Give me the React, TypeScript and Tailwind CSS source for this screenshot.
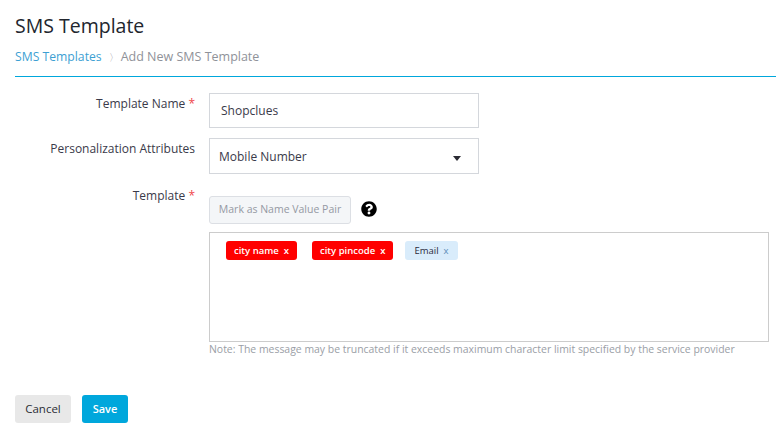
import { FaQuestionCircle } from "react-icons/fa";

const Tag = ({ label, light }: { label: string; light?: boolean }) => (
    <span
        className={`flex h-[19px] items-center rounded-[3px] pt-[1px] text-[9.5px] ${
            light ? "bg-[#d9ecfb] px-[9px] font-normal text-[#2b2b3b]" : "bg-[#ff0000] px-[8px] font-semibold text-white"
        }`}
    >
        {label}
        <span className={`ml-[5px] ${light ? "text-[#5b8db8]" : ""}`}>x</span>
    </span>
);

export default function App() {
    return (
        <div className="h-[429px] w-[776px] overflow-hidden bg-white font-['Open_Sans',sans-serif] text-[#3a3a4a]">
            <div className="pl-[15px]">
                <h1 className="pt-[12px] text-[19.5px] leading-[28px] text-[#22262e]">SMS Template</h1>
                <div className="mt-[8px] flex h-[28px] items-start text-[12.5px] leading-[18px]">
                    <span className="text-[12.2px] text-[#3d9fd3]">SMS Templates</span>
                    <span className="ml-[7px] text-[10px] text-[#a0a0a8]">〉</span>
                    <span className="ml-[2px] text-[#8f9299]">Add New SMS Template</span>
                </div>
                <div className="h-px bg-[#00a7dc]" />
            </div>

            <div className="mt-[16px] flex items-start">
                <label className="w-[195px] pt-[2px] text-right text-[12px] leading-[18px]">
                    Template Name <span className="text-[#f0454b]">*</span>
                </label>
                <div className="ml-[14px] flex h-[35px] w-[270px] items-center border border-[#d4d7dc] pl-[11px] text-[12px]">
                    Shopclues
                </div>
            </div>

            <div className="mt-[10px] flex items-start">
                <label className="w-[195px] pt-[2px] text-right text-[12px] leading-[18px]">
                    Personalization Attributes
                </label>
                <div className="ml-[14px] flex h-[36px] w-[270px] items-center justify-between border border-[#d4d7dc] pl-[9px] pr-[17px] pt-[2px] text-[12px]">
                    Mobile Number
                    <svg width="8" height="5" viewBox="0 0 8 5" className="mt-[2px]">
                        <path d="M0 0h8L4 5z" fill="#2b2b33" />
                    </svg>
                </div>
            </div>

            <div className="mt-[12px] flex items-start">
                <label className="w-[195px] pt-[1px] text-right text-[12px] leading-[18px]">
                    Template <span className="text-[#f0454b]">*</span>
                </label>
                <div className="ml-[14px] w-[560px]">
                    <div className="mt-[10px] flex items-center">
                        <button className="h-[28px] w-[142px] rounded-[3px] border border-[#dcdfe4] bg-[#f4f6f8] text-[10.5px] font-medium text-[#9499a3]">
                            Mark as Name Value Pair
                        </button>
                        <FaQuestionCircle className="-mt-[2px] ml-[10px] text-[16px] text-black" />
                    </div>
                    <div className="mt-[8px] flex h-[110px] items-start border border-[#cccccc] pl-[16px] pt-[8px]">
                        <Tag label="city name" />
                        <div className="ml-[15px]">
                            <Tag label="city pincode" />
                        </div>
                        <div className="ml-[12px]">
                            <Tag label="Email" light />
                        </div>
                    </div>
                    <p className="text-[10.45px] leading-[14px] text-[#9a9ea6]">
                        Note: The message may be truncated if it exceeds maximum character limit specified by the service provider
                    </p>
                </div>
            </div>

            <div className="ml-[15px] mt-[39px] flex gap-[11px]">
                <button className="h-[28px] w-[56px] rounded-[3px] bg-[#e8e8e8] text-[11.5px] text-[#2b2e36]">Cancel</button>
                <button className="h-[28px] w-[46px] rounded-[3px] bg-[#00a7dc] text-[11px] font-semibold text-white">Save</button>
            </div>
        </div>
    );
}
